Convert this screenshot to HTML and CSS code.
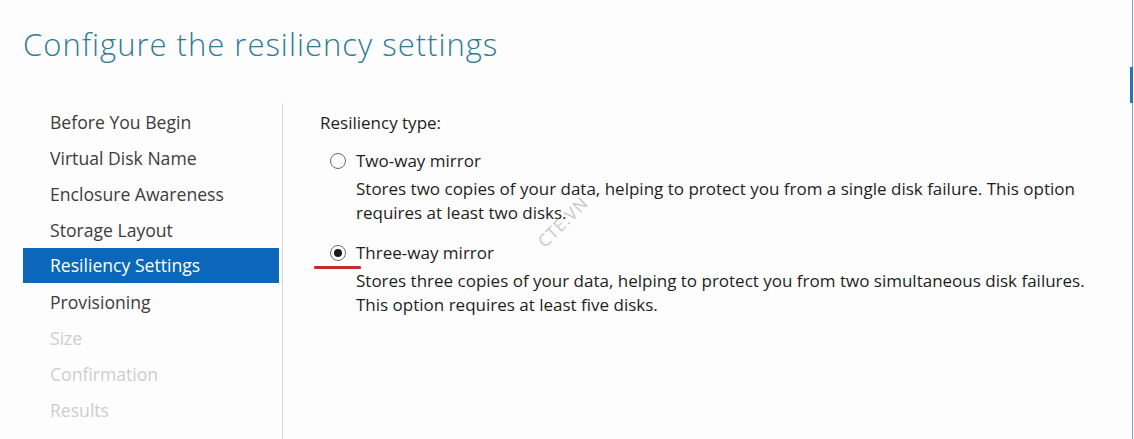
FILE: index.html
```html
<!DOCTYPE html>
<html>
<head>
<meta charset="utf-8">
<link rel="stylesheet" href="styles.css">
</head>
<body>
<div class="window">
  <div class="page">
    <h1 class="title">Configure the resiliency settings</h1>
    <div class="body">
      <nav class="steps">
        <div class="step">Before You Begin</div>
        <div class="step">Virtual Disk Name</div>
        <div class="step">Enclosure Awareness</div>
        <div class="step">Storage Layout</div>
        <div class="step active">Resiliency Settings</div>
        <div class="step">Provisioning</div>
        <div class="step disabled">Size</div>
        <div class="step disabled">Confirmation</div>
        <div class="step disabled">Results</div>
      </nav>
      <section class="content">
        <div class="label">Resiliency type:</div>
        <div class="option">
          <div class="opt-head"><span class="radio"></span><span>Two-way mirror</span></div>
          <p class="desc">Stores two copies of your data, helping to protect you from a single disk failure. This option requires at least two disks.</p>
        </div>
        <div class="option second">
          <div class="opt-head"><span class="radio checked"></span><span>Three-way mirror</span><span class="mark"></span></div>
          <p class="desc">Stores three copies of your data, helping to protect you from two simultaneous disk failures. This option requires at least five disks.</p>
        </div>
        <span class="watermark">CTE.VN</span>
      </section>
    </div>
  </div>
  <div class="edge"><span class="edge-thumb"></span></div>
</div>
</body>
</html>
```
FILE: styles.css
```css
* { box-sizing: border-box; }
html, body { margin: 0; padding: 0; }
body {
  width: 1134px;
  height: 439px;
  overflow: hidden;
  background: #fdfdfd;
  font-family: "Open Sans", "Noto Sans", sans-serif;
  color: #1e1e1e;
}
.window {
  display: flex;
  height: 439px;
}
.page {
  flex: 1;
  display: flex;
  flex-direction: column;
}
.title {
  margin: 24px 0 0 23px;
  font-weight: 300;
  font-size: 31px;
  line-height: 40px;
  color: #2f7c97;
  letter-spacing: 1px;
}
.body {
  display: flex;
  flex: 1;
  margin-top: 39px;
}
.steps {
  width: 259px;
  margin-left: 23px;
  padding-top: 1px;
  display: flex;
  flex-direction: column;
}
.step {
  height: 36px;
  line-height: 36px;
  padding-left: 27px;
  font-size: 17.6px;
  color: #3c3c3c;
}
.step.active {
  background: #0a67b9;
  color: #fff;
  width: 256px;
  height: 35px;
  line-height: 35px;
  margin-bottom: 1px;
}
.step.disabled { color: #cdcdcd; }
.content {
  flex: 1;
  border-left: 1px solid #d6d6d6;
  padding: 9px 0 0 37px;
  position: relative;
  font-size: 17px;
}
.label {
  line-height: 22px;
  color: #1e1e1e;
}
.option { margin-top: 16px; }
.option.second { margin-top: 17px; }
.opt-head {
  display: flex;
  align-items: center;
  line-height: 22px;
  position: relative;
}
.radio {
  width: 16px;
  height: 16px;
  border: 1px solid #6a6a6a;
  border-radius: 50%;
  margin: 0 10px 0 10px;
  background: #fff;
  display: flex;
  align-items: center;
  justify-content: center;
}
.radio.checked::after {
  content: "";
  width: 8px;
  height: 8px;
  border-radius: 50%;
  background: #1a1a1a;
}
.mark {
  position: absolute;
  left: -6px;
  top: 24px;
  width: 47px;
  height: 3px;
  background: #c42a2f;
  border-radius: 1px;
}
.desc {
  margin: 5px 0 0 36px;
  line-height: 24px;
  max-width: 745px;
  color: #1e1e1e;
}
.watermark {
  position: absolute;
  left: 240px;
  top: 109px;
  width: 80px;
  height: 20px;
  line-height: 20px;
  text-align: center;
  font-size: 17px;
  color: #c8c8c8;
  transform: rotate(-45deg);
  transform-origin: center center;
  letter-spacing: 1px;
}
.edge {
  width: 3px;
  margin-right: 1px;
  border-right: 1px solid #6aa5d8;
  position: relative;
}
.edge-thumb {
  position: absolute;
  right: -1px;
  top: 67px;
  width: 3px;
  height: 36px;
  background: #1b78c4;
}
```
